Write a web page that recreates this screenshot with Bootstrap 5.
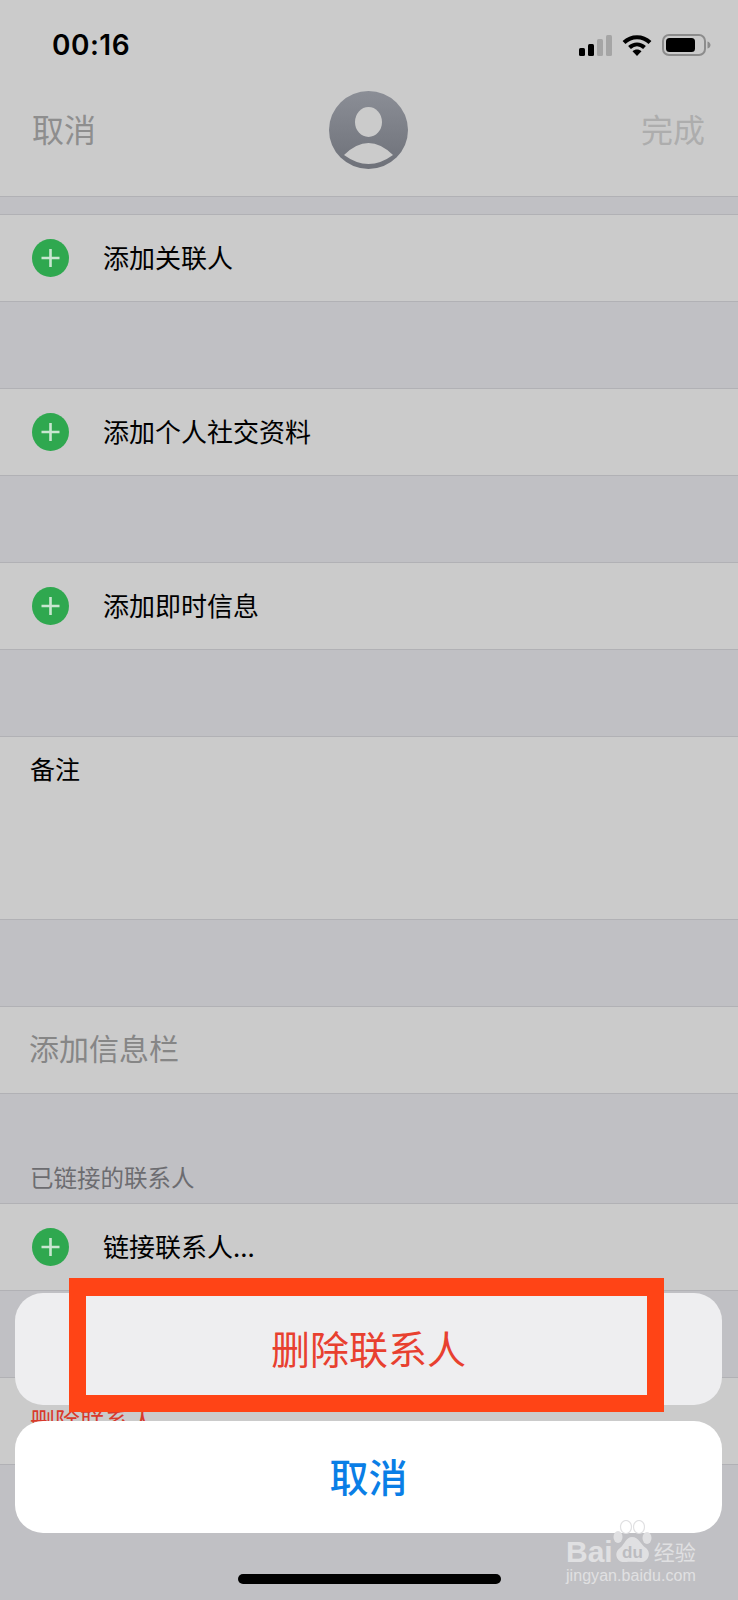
<!DOCTYPE html>
<html lang="zh-CN">
<head>
  <meta charset="UTF-8" />
  <meta name="viewport" content="width=device-width, initial-scale=1" />
  <title>编辑联系人</title>
  <link href="https://cdn.jsdelivr.net/npm/bootstrap@5.3.3/dist/css/bootstrap.min.css" rel="stylesheet" />
  <style>
    body {
      background-color: #c0c0c4;
      font-family: "Noto Sans CJK SC", "Liberation Sans", sans-serif;
      height: 1600px;
      overflow: hidden;
      color: #000;
    }
    .phone-head {
      background-color: #cbcbcb;
      height: 197px;
      border-bottom: 1px solid #b1b1b5;
    }
    .status-row {
      height: 90px;
      padding: 0 27px 0 52px;
    }
    .clock {
      font-family: Inter, "Liberation Sans", sans-serif;
      font-weight: 600;
      font-size: 28px;
      letter-spacing: 0.5px;
    }
    .status-icons { gap: 10px; }
    .nav-row { padding: 0 33px 0 32px; height: 80px; }
    .nav-cancel, .nav-done { font-size: 32px; padding-bottom: 4px; }
    .nav-cancel { color: #8e8e8e; }
    .nav-done { color: #adadad; }
    .sheet-list { margin-bottom: 86px; }
    .sheet-list .list-group-item {
      background-color: #cbcbcb;
      border-style: solid;
      border-color: #b1b1b5;
      border-width: 1px 0 !important;
      color: #000;
      padding: 0 0 0 32px;
      height: 88px;
      font-size: 26px;
      gap: 34px;
    }
    .sheet-list .list-group-item span { padding-bottom: 4px; }
    .sheet-list .notes-item {
      height: 184px;
      font-size: 25px;
      padding: 13px 0 0 30px;
      align-items: flex-start !important;
    }
    .sheet-list .field-item { font-size: 30px; color: #868686; padding: 0 0 6px 29px; }
    .sheet-list .del-item { font-size: 25px; color: #d93a2c; padding: 0 0 0 30px; }
    .first-list { margin-top: 17px; }
    .linked-label {
      height: 22px;
      margin-top: -14px;
      margin-bottom: 15px;
      padding-left: 30px;
      font-size: 23.5px;
      line-height: 22px;
      color: #6c6c70;
    }
    .action-wrap {
      position: absolute;
      left: 15px;
      top: 1293px;
      width: 707px;
    }
    .action-btn {
      height: 112px;
      border: 0;
      border-radius: 28px;
      font-size: 39px;
      line-height: 1;
      padding: 0 0 4px;
    }
    .action-del, .action-del:hover { background-color: #eeeef0; color: #e8402f; }
    .action-cancel, .action-cancel:hover { background-color: #fff; color: #0a7ee6; font-weight: 500; }
    .red-frame {
      position: absolute;
      left: 54px;
      top: -15px;
      width: 595px;
      height: 134px;
      border: solid #ff4416;
      border-width: 18px 17px 17px 17px;
      pointer-events: none;
    }
    .home-bar {
      position: absolute;
      left: 238px;
      top: 1574px;
      width: 263px;
      height: 10px;
      border-radius: 5px;
      background-color: #000;
    }
    .baidu-mark {
      position: absolute;
      left: 566px;
      top: 1520px;
      width: 135px;
      color: #e0e0e2;
      line-height: 1;
    }
    .baidu-bai {
      font-family: "Liberation Sans", sans-serif;
      font-weight: 700;
      font-size: 30px;
      margin-bottom: 1px;
    }
    .baidu-jy { font-size: 21px; margin: 0 0 6px 1px; }
    .baidu-url {
      font-family: "Liberation Sans", sans-serif;
      font-size: 16px;
      letter-spacing: 0.05px;
      white-space: nowrap;
    }
  </style>
</head>
<body class="position-relative">
  <!-- header -->
  <div class="phone-head">
    <div class="status-row d-flex justify-content-between align-items-center">
      <span class="clock">00:16</span>
      <div class="status-icons d-flex align-items-center">
        <svg width="33" height="21" viewBox="0 0 33 21">
          <rect x="0" y="13" width="6" height="8" rx="1.5" fill="#000"/>
          <rect x="9" y="9" width="6" height="12" rx="1.5" fill="#000"/>
          <rect x="18" y="4" width="6" height="17" rx="1.5" fill="#a5a5a5"/>
          <rect x="27" y="0" width="6" height="21" rx="1.5" fill="#a5a5a5"/>
        </svg>
        <svg width="30" height="22" viewBox="0 0 30 22">
          <path d="M2 8.5C9.5 1.5 20.5 1.5 28 8.5" fill="none" stroke="#000" stroke-width="4.2"/>
          <path d="M7.5 13.5C12 9.5 18 9.5 22.500 13.500" fill="none" stroke="#000" stroke-width="4.200"/>
          <path d="M10.500 17.300C13 15 17 15 19.500 17.300L15 22Z" fill="#000"/>
        </svg>
        <svg width="49" height="22" viewBox="0 0 49 22">
          <rect x="1" y="1" width="42" height="20" rx="6" fill="none" stroke="#8c8c8c" stroke-width="2"/>
          <rect x="4" y="4" width="29" height="14" rx="3.500" fill="#000"/>
          <path d="M45.500 7.500C47.500 8 48.500 9.500 48.500 11C48.500 12.500 47.500 14 45.500 14.500Z" fill="#8c8c8c"/>
        </svg>
      </div>
    </div>
    <div class="nav-row d-flex justify-content-between align-items-center">
      <span class="nav-cancel">取消</span>
      <svg width="79" height="78" viewBox="0 0 79 78">
        <defs>
          <linearGradient id="avatarFill" x1="0" y1="0" x2="0" y2="1">
            <stop offset="0" stop-color="#8b8e96"/>
            <stop offset="1" stop-color="#6e7179"/>
          </linearGradient>
        </defs>
        <ellipse cx="39.500" cy="39" rx="39.500" ry="39" fill="url(#avatarFill)"/>
        <ellipse cx="39.500" cy="31" rx="13.500" ry="15" fill="#cbcbcb"/>
        <path d="M15 64Q39.500 40 64 64Q39.500 82 15 64Z" fill="#cbcbcb"/>
      </svg>
      <span class="nav-done">完成</span>
    </div>
  </div>

  <!-- rows -->
  <ul class="list-group list-group-flush sheet-list first-list">
    <li class="list-group-item d-flex align-items-center">
      <svg width="37" height="38" viewBox="0 0 37 38"><ellipse cx="18.500" cy="19" rx="18.500" ry="19" fill="#2fa84f"/><path d="M18.500 10v18M9.500 19h18" stroke="#c9e6d0" stroke-width="2.600"/></svg>
      <span>添加关联人</span>
    </li>
  </ul>
  <ul class="list-group list-group-flush sheet-list">
    <li class="list-group-item d-flex align-items-center">
      <svg width="37" height="38" viewBox="0 0 37 38"><ellipse cx="18.500" cy="19" rx="18.500" ry="19" fill="#2fa84f"/><path d="M18.500 10v18M9.500 19h18" stroke="#c9e6d0" stroke-width="2.600"/></svg>
      <span>添加个人社交资料</span>
    </li>
  </ul>
  <ul class="list-group list-group-flush sheet-list">
    <li class="list-group-item d-flex align-items-center">
      <svg width="37" height="38" viewBox="0 0 37 38"><ellipse cx="18.500" cy="19" rx="18.500" ry="19" fill="#2fa84f"/><path d="M18.500 10v18M9.500 19h18" stroke="#c9e6d0" stroke-width="2.600"/></svg>
      <span>添加即时信息</span>
    </li>
  </ul>
  <ul class="list-group list-group-flush sheet-list">
    <li class="list-group-item notes-item d-flex">备注</li>
  </ul>
  <ul class="list-group list-group-flush sheet-list">
    <li class="list-group-item field-item d-flex align-items-center">添加信息栏</li>
  </ul>
  <div class="linked-label">已链接的联系人</div>
  <ul class="list-group list-group-flush sheet-list">
    <li class="list-group-item d-flex align-items-center">
      <svg width="37" height="38" viewBox="0 0 37 38"><ellipse cx="18.500" cy="19" rx="18.500" ry="19" fill="#2fa84f"/><path d="M18.500 10v18M9.500 19h18" stroke="#c9e6d0" stroke-width="2.600"/></svg>
      <span>链接联系人...</span>
    </li>
  </ul>
  <ul class="list-group list-group-flush sheet-list">
    <li class="list-group-item del-item d-flex align-items-center">删除联系人</li>
  </ul>

  <!-- action sheet -->
  <div class="action-wrap d-grid gap-3">
    <button type="button" class="btn action-btn action-del">删除联系人</button>
    <button type="button" class="btn action-btn action-cancel">取消</button>
    <div class="red-frame"></div>
  </div>

  <div class="home-bar"></div>

  <!-- watermark -->
  <div class="baidu-mark">
    <div class="d-flex align-items-end">
      <span class="baidu-bai">Bai</span>
      <svg width="40" height="48" viewBox="0 0 40 48">
        <ellipse cx="13" cy="7" rx="5.500" ry="6.500" fill="none" stroke="#e0e0e2" stroke-width="1.200"/>
        <ellipse cx="26" cy="7" rx="5.500" ry="6.500" fill="none" stroke="#e0e0e2" stroke-width="1.200"/>
        <ellipse cx="5" cy="17" rx="4.500" ry="6" fill="#e0e0e2"/>
        <ellipse cx="34" cy="18" rx="4.500" ry="6" fill="#e0e0e2"/>
        <path d="M19 17C26 17 27 24 33 28C39 33 35 43 27 42C23 41.500 16 41.500 12 42C4 43 0 33 7 28C12 24 13 17 19 17Z" fill="#e0e0e2"/>
        <text x="19.500" y="38" text-anchor="middle" font-family="Liberation Sans, sans-serif" font-weight="700" font-size="17" fill="#bcbcc0">du</text>
      </svg>
      <span class="baidu-jy">经验</span>
    </div>
    <div class="baidu-url">jingyan.baidu.com</div>
  </div>

  <script src="https://cdn.jsdelivr.net/npm/bootstrap@5.3.3/dist/js/bootstrap.bundle.min.js"></script>
</body>
</html>
